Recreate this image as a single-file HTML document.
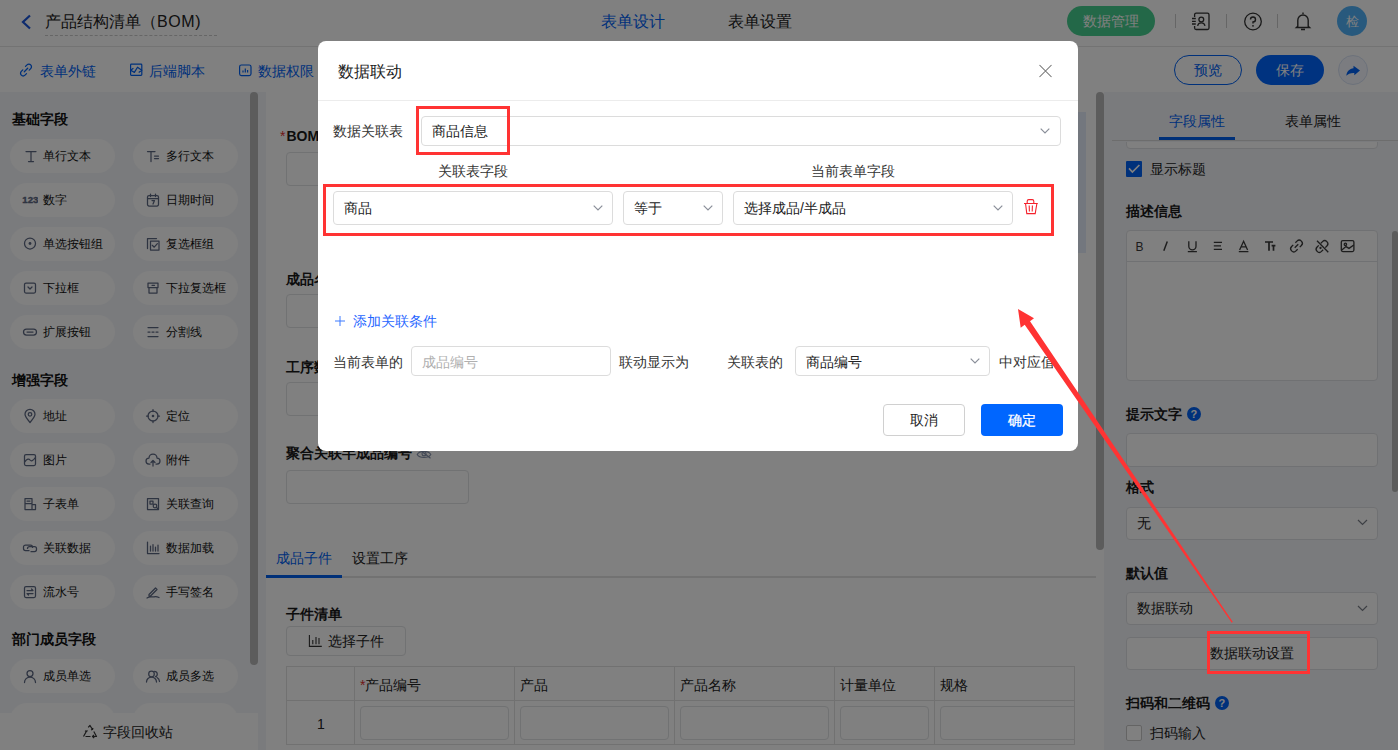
<!DOCTYPE html>
<html><head><meta charset="utf-8">
<style>
*{box-sizing:border-box;margin:0;padding:0}
html,body{width:1398px;height:750px;overflow:hidden;background:#fff}
body{font-family:"Liberation Sans",sans-serif;font-size:14px;color:#333;position:relative}
.a{position:absolute}
.t{position:absolute;white-space:nowrap;line-height:1}
svg{display:block}
/* top */
#top{left:0;top:0;width:1398px;height:47px;background:#fff;border-bottom:1px solid #e6e6e6}
#bar2{left:0;top:47px;width:1398px;height:45px;background:#fff}
#left{left:0;top:92px;width:266px;height:658px;background:#f4f6fa}
.sec{font-weight:bold;color:#111;font-size:14px}
.chip{position:absolute;width:105px;height:34px;border-radius:17px;background:#fff}
.chip .ic{position:absolute;left:12px;top:9px;width:16px;height:16px}
.chip .tx{position:absolute;left:33px;top:11px;font-size:12px;line-height:12px;color:#111;white-space:nowrap}
#canvas{left:266px;top:92px;width:830px;height:658px;background:#fff}
#right{left:1104px;top:92px;width:294px;height:658px;background:#f4f6fa}
.inp{position:absolute;border:1px solid #e2e3e6;border-radius:4px;background:#fff}
.lbl{font-weight:bold;color:#1a1a1a;font-size:14px}
#ov{left:0;top:0;width:1398px;height:750px;background:rgba(0,0,0,.498)}
#modal{left:318px;top:41px;width:760px;height:410px;background:#fff;border-radius:8px;overflow:hidden}
.sel{position:absolute;border:1px solid #dcdcdc;border-radius:4px;background:#fff}
.chev{position:absolute;width:10px;height:6px}
.red{position:absolute;border:3px solid #ff3333}
</style></head><body>

<!-- ============ TOP BAR ============ -->
<div id="top" class="a">
  <svg class="a" style="left:20px;top:14px" width="12" height="16" viewBox="0 0 12 16"><polyline points="10,1.5 3,8 10,14.5" fill="none" stroke="#1a56db" stroke-width="2.2"/></svg>
  <div class="t" style="left:45px;top:14px;font-size:16px;color:#222">产品结构清单（<span style="letter-spacing:0.6px">BOM)</span></div>
  <div class="a" style="left:45px;top:35px;width:172px;border-top:1px dashed #ccc"></div>
  <div class="t" style="left:601px;top:14px;font-size:16px;color:#0062f5">表单设计</div>
  <div class="t" style="left:728px;top:14px;font-size:16px;color:#222">表单设置</div>
  <div class="a" style="left:1067px;top:6px;width:88px;height:30px;border-radius:15px;background:#47cf8f"></div>
  <div class="t" style="left:1083px;top:14px;font-size:14px;color:#fff">数据管理</div>
  <div class="a" style="left:1175px;top:14px;width:1px;height:14px;background:#ccc"></div>
  <div class="a" style="left:1226px;top:14px;width:1px;height:14px;background:#ccc"></div>
  <div class="a" style="left:1277px;top:14px;width:1px;height:14px;background:#ccc"></div>
  <svg class="a" style="left:1188px;top:8px" width="26" height="26" viewBox="0 0 26 26"><g fill="none" stroke="#333" stroke-width="1.3">
    <path d="M6.6 9V6.6A1.5 1.5 0 0 1 8.1 5.2H19.5A1.5 1.5 0 0 1 21 6.7V20A1.5 1.5 0 0 1 19.5 21.5H8.1A1.5 1.5 0 0 1 6.6 20V18"/>
    <path d="M4 10.5H7.8M4 13.3H7.8M4 16H7.8"/>
    <circle cx="13.3" cy="11.5" r="2.4"/>
    <path d="M9.6 17.8A3.8 3.8 0 0 1 17 17.8"/></g></svg>
  <svg class="a" style="left:1243px;top:12px" width="20" height="20" viewBox="0 0 20 20"><circle cx="10" cy="9.5" r="8.3" fill="none" stroke="#333" stroke-width="1.3"/><path d="M7.5 7.5A2.5 2.5 0 1 1 10 10V11.5" fill="none" stroke="#333" stroke-width="1.4"/><circle cx="10" cy="13.8" r="0.9" fill="#333"/></svg>
  <svg class="a" style="left:1290px;top:8px" width="26" height="26" viewBox="0 0 26 26"><g fill="none" stroke="#333" stroke-width="1.4">
    <path d="M12.3 5.3H13.7M7.8 18.2V12.2A5.2 5.2 0 0 1 18.2 12.2V18.2L19.6 19.5H6.4Z M11 21.5H15"/></g></svg>
  <div class="a" style="left:1337px;top:6px;width:30px;height:30px;border-radius:15px;background:#50b2fa"></div>
  <div class="t" style="left:1346px;top:15px;font-size:13px;color:#fff">检</div>
</div>

<!-- ============ BAR 2 ============ -->
<div id="bar2" class="a">
  <svg class="a" style="left:16px;top:13px" width="20" height="20" viewBox="0 0 20 20"><g fill="none" stroke="#0062f5" stroke-width="1.3" stroke-linecap="round">
    <path d="M9.5 6.4L11 4.9A2.6 2.6 0 0 1 14.7 8.6L13.2 10.1M10.5 13.6L9 15.1A2.6 2.6 0 0 1 5.3 11.4L6.8 9.9M8.3 11.7L11.7 8.3"/></g></svg>
  <div class="t" style="left:40px;top:17px;font-size:14px;color:#0062f5">表单外链</div>
  <svg class="a" style="left:126px;top:13px" width="20" height="20" viewBox="0 0 20 20"><g fill="none" stroke="#0062f5" stroke-width="1.2" stroke-linejoin="round">
    <rect x="4.6" y="4.2" width="11.2" height="11.2" rx="0.8"/>
    <path d="M4.6 10.3L7.4 8.2M4.6 10.3L8.4 12.4L11.5 7.2L15.8 10.3L12.7 12.4"/></g></svg>
  <div class="t" style="left:149px;top:17px;font-size:14px;color:#0062f5">后端脚本</div>
  <svg class="a" style="left:235px;top:13px" width="20" height="20" viewBox="0 0 20 20"><g fill="none" stroke="#0062f5" stroke-width="1.2">
    <rect x="4.6" y="5" width="11.4" height="10.6" rx="1.8"/>
    <path d="M8 10.5V12.5M10.3 8.6V12.5M12.6 10V12.5"/></g></svg>
  <div class="t" style="left:258px;top:17px;font-size:14px;color:#0062f5">数据权限</div>
  <div class="a" style="left:1174px;top:8px;width:68px;height:30px;border-radius:15px;border:1px solid #0062f5"></div>
  <div class="t" style="left:1194px;top:16px;font-size:14px;color:#0062f5">预览</div>
  <div class="a" style="left:1256px;top:8px;width:68px;height:30px;border-radius:15px;background:#0066ff"></div>
  <div class="t" style="left:1276px;top:16px;font-size:14px;color:#fff">保存</div>
  <div class="a" style="left:1338px;top:8px;width:30px;height:30px;border-radius:15px;border:1px solid #d8e2f5;background:#f5f8ff"></div>
  <svg class="a" style="left:1338px;top:8px" width="30" height="30" viewBox="0 0 30 30"><path d="M8.3 20.8C8.8 16 11.5 13.8 15.5 13.2V10.8L22 15.5L16.3 20.3V18C12.5 17.8 10 19 8.3 20.8Z" fill="#0062f5"/></svg>
</div>

<!-- ============ LEFT ============ -->
<div id="left" class="a">
  <div class="t sec" style="left:12px;top:20px">基础字段</div>
  <div class="chip" style="left:10px;top:47px"><svg class="ic" viewBox="0 0 16 16"><path fill="none" stroke="#5d6882" stroke-width="1.25" stroke-linecap="round" stroke-linejoin="round" d="M4 3.6H14M9 3.6V13.5M6.5 13.5H11.5"/></svg><span class="tx">单行文本</span></div>
  <div class="chip" style="left:133px;top:47px"><svg class="ic" viewBox="0 0 16 16"><path fill="none" stroke="#5d6882" stroke-width="1.25" stroke-linecap="round" stroke-linejoin="round" d="M2.5 3.5H10M6 3.5V13.5M9.5 8H13.5M9.5 10.5H13.5"/></svg><span class="tx">多行文本</span></div>
  <div class="chip" style="left:10px;top:91px"><svg class="ic" viewBox="0 0 16 16"><text x="0.3" y="11.2" font-family="Liberation Sans" font-weight="bold" font-size="9.6" fill="#5d6882" stroke="#5d6882" stroke-width="0.35">123</text></svg><span class="tx">数字</span></div>
  <div class="chip" style="left:133px;top:91px"><svg class="ic" viewBox="0 0 16 16"><path fill="none" stroke="#5d6882" stroke-width="1.25" stroke-linecap="round" stroke-linejoin="round" d="M4 3.5H12A1.5 1.5 0 0 1 13.5 5V12.5A1.5 1.5 0 0 1 12 14H4A1.5 1.5 0 0 1 2.5 12.5V5A1.5 1.5 0 0 1 4 3.5ZM2.5 6.5H13.5M5.5 2V4.5M10.5 2V4.5M7 8.5H9.5L8 12"/></svg><span class="tx">日期时间</span></div>
  <div class="chip" style="left:10px;top:135px"><svg class="ic" viewBox="0 0 16 16"><circle cx="8" cy="7.5" r="5.5" fill="none" stroke="#5d6882" stroke-width="1.25" stroke-linecap="round" stroke-linejoin="round"/><circle cx="8" cy="7.5" r="1.4" fill="#5d6882"/></svg><span class="tx">单选按钮组</span></div>
  <div class="chip" style="left:133px;top:135px"><svg class="ic" viewBox="0 0 16 16"><path fill="none" stroke="#5d6882" stroke-width="1.25" stroke-linecap="round" stroke-linejoin="round" d="M2.5 12.5V2.5H11.5"/><path fill="none" stroke="#5d6882" stroke-width="1.25" stroke-linecap="round" stroke-linejoin="round" d="M5.5 5H14V14H5.5ZM7.3 9.3L9.2 11.2L12.4 7.6"/></svg><span class="tx">复选框组</span></div>
  <div class="chip" style="left:10px;top:179px"><svg class="ic" viewBox="0 0 16 16"><path fill="none" stroke="#5d6882" stroke-width="1.25" stroke-linecap="round" stroke-linejoin="round" d="M4 3H12A1.5 1.5 0 0 1 13.5 4.5V11.5A1.5 1.5 0 0 1 12 13H4A1.5 1.5 0 0 1 2.5 11.5V4.5A1.5 1.5 0 0 1 4 3ZM6 7L8 9L10 7"/></svg><span class="tx">下拉框</span></div>
  <div class="chip" style="left:133px;top:179px"><svg class="ic" viewBox="0 0 16 16"><path fill="none" stroke="#5d6882" stroke-width="1.25" stroke-linecap="round" stroke-linejoin="round" d="M3 3H13V7.5H3ZM4 7.5V13H12V7.5M7 5.3H9.5"/></svg><span class="tx">下拉复选框</span></div>
  <div class="chip" style="left:10px;top:223px"><svg class="ic" viewBox="0 0 16 16"><rect x="1.5" y="5" width="13" height="6" rx="3" fill="none" stroke="#5d6882" stroke-width="1.25" stroke-linecap="round" stroke-linejoin="round"/><path fill="none" stroke="#5d6882" stroke-width="1.25" stroke-linecap="round" stroke-linejoin="round" d="M5 8H11"/></svg><span class="tx">扩展按钮</span></div>
  <div class="chip" style="left:133px;top:223px"><svg class="ic" viewBox="0 0 16 16"><path fill="none" stroke="#5d6882" stroke-width="1.25" stroke-linecap="round" stroke-linejoin="round" d="M3 3.5H13M3 8H5M7 8H9M11 8H13M3 12.5H13"/></svg><span class="tx">分割线</span></div>
  <div class="t sec" style="left:12px;top:281px">增强字段</div>
  <div class="chip" style="left:10px;top:307px"><svg class="ic" viewBox="0 0 16 16"><path fill="none" stroke="#5d6882" stroke-width="1.25" stroke-linecap="round" stroke-linejoin="round" d="M8 14.5C5 11 3 8.5 3 6.3A5 5 0 0 1 13 6.3C13 8.5 11 11 8 14.5Z"/><circle cx="8" cy="6.3" r="1.8" fill="none" stroke="#5d6882" stroke-width="1.25" stroke-linecap="round" stroke-linejoin="round"/></svg><span class="tx">地址</span></div>
  <div class="chip" style="left:133px;top:307px"><svg class="ic" viewBox="0 0 16 16"><circle cx="8" cy="8" r="5" fill="none" stroke="#5d6882" stroke-width="1.25" stroke-linecap="round" stroke-linejoin="round"/><circle cx="8" cy="8" r="1.3" fill="#5d6882"/><path fill="none" stroke="#5d6882" stroke-width="1.25" stroke-linecap="round" stroke-linejoin="round" d="M8 1.5V3.5M8 12.5V14.5M1.5 8H3.5M12.5 8H14.5"/></svg><span class="tx">定位</span></div>
  <div class="chip" style="left:10px;top:351px"><svg class="ic" viewBox="0 0 16 16"><path fill="none" stroke="#5d6882" stroke-width="1.25" stroke-linecap="round" stroke-linejoin="round" d="M4 2.5H12A1.5 1.5 0 0 1 13.5 4V12A1.5 1.5 0 0 1 12 13.5H4A1.5 1.5 0 0 1 2.5 12V4A1.5 1.5 0 0 1 4 2.5ZM2.8 10C5 6.5 7 6.5 8 8S11 9 13.3 5.5"/></svg><span class="tx">图片</span></div>
  <div class="chip" style="left:133px;top:351px"><svg class="ic" viewBox="0 0 16 16"><path fill="none" stroke="#5d6882" stroke-width="1.25" stroke-linecap="round" stroke-linejoin="round" d="M5 12H4A3 3 0 0 1 4 6A4 4 0 0 1 12 6A3 3 0 0 1 12 12H11M8 14V8.5M6 10.5L8 8.5L10 10.5"/></svg><span class="tx">附件</span></div>
  <div class="chip" style="left:10px;top:395px"><svg class="ic" viewBox="0 0 16 16"><path fill="none" stroke="#5d6882" stroke-width="1.25" stroke-linecap="round" stroke-linejoin="round" d="M3 2.5H10V7.5H3ZM3 7.5V13.5H10M10 8.5H13.5V13.5H10ZM5 5H8"/></svg><span class="tx">子表单</span></div>
  <div class="chip" style="left:133px;top:395px"><svg class="ic" viewBox="0 0 16 16"><path fill="none" stroke="#5d6882" stroke-width="1.25" stroke-linecap="round" stroke-linejoin="round" d="M2.5 2.5H13.5V13.5H2.5ZM5 5H8V8H5Z"/><circle cx="10" cy="10" r="1.8" fill="none" stroke="#5d6882" stroke-width="1.25" stroke-linecap="round" stroke-linejoin="round"/><path fill="none" stroke="#5d6882" stroke-width="1.25" stroke-linecap="round" stroke-linejoin="round" d="M11.3 11.3L12.8 12.8"/></svg><span class="tx">关联查询</span></div>
  <div class="chip" style="left:10px;top:439px"><svg class="ic" viewBox="0 0 16 16"><g fill="none" stroke="#5d6882" stroke-width="1.25" stroke-linejoin="round"><path d="M7.5 10.5H3.5A2 2 0 0 1 1.5 8.5V7A2 2 0 0 1 3.5 5H8.5A2 2 0 0 1 10.5 7V8"/><path d="M8.5 6.5V6.5M8.5 11.5H12.5A2 2 0 0 0 14.5 9.5V8.5A2 2 0 0 0 12.5 6.5H7.5A2 2 0 0 0 5.5 8.5V9"/></g></svg><span class="tx">关联数据</span></div>
  <div class="chip" style="left:133px;top:439px"><svg class="ic" viewBox="0 0 16 16"><path fill="none" stroke="#5d6882" stroke-width="1.25" stroke-linecap="round" stroke-linejoin="round" d="M2.5 2V13.5H14M5.5 6V11M8 4.5V11M10.5 7V11M13 5V11"/></svg><span class="tx">数据加载</span></div>
  <div class="chip" style="left:10px;top:483px"><svg class="ic" viewBox="0 0 16 16"><path fill="none" stroke="#5d6882" stroke-width="1.25" stroke-linecap="round" stroke-linejoin="round" d="M4 2.5H12A1.5 1.5 0 0 1 13.5 4V12A1.5 1.5 0 0 1 12 13.5H4A1.5 1.5 0 0 1 2.5 12V4A1.5 1.5 0 0 1 4 2.5ZM5 6.5H11L9.5 5M11 9.5H5L6.5 11"/></svg><span class="tx">流水号</span></div>
  <div class="chip" style="left:133px;top:483px"><svg class="ic" viewBox="0 0 16 16"><path fill="none" stroke="#5d6882" stroke-width="1.25" stroke-linecap="round" stroke-linejoin="round" d="M4 10.5L10.5 4L12 5.5L5.5 12H4ZM2 14C5 12 7 13.5 9 12.8C10.5 12.3 12 12.5 14 13.5"/></svg><span class="tx">手写签名</span></div>
  <div class="t sec" style="left:12px;top:540px">部门成员字段</div>
  <div class="chip" style="left:10px;top:567px"><svg class="ic" viewBox="0 0 16 16"><circle cx="8" cy="5.5" r="3" fill="none" stroke="#5d6882" stroke-width="1.25" stroke-linecap="round" stroke-linejoin="round"/><path fill="none" stroke="#5d6882" stroke-width="1.25" stroke-linecap="round" stroke-linejoin="round" d="M2.5 14.5A5.5 5.5 0 0 1 13.5 14.5"/></svg><span class="tx">成员单选</span></div>
  <div class="chip" style="left:133px;top:567px"><svg class="ic" viewBox="0 0 16 16"><circle cx="6.5" cy="6" r="2.8" fill="none" stroke="#5d6882" stroke-width="1.25" stroke-linecap="round" stroke-linejoin="round"/><path fill="none" stroke="#5d6882" stroke-width="1.25" stroke-linecap="round" stroke-linejoin="round" d="M1.5 14A5 5 0 0 1 11.5 14M9.5 3.3A2.8 2.8 0 0 1 10.5 8.7M12 9.5A5 5 0 0 1 14.5 13.5"/></svg><span class="tx">成员多选</span></div>
  <div class="chip" style="left:10px;top:611px"></div>
  <div class="chip" style="left:133px;top:611px"></div>
  <div class="a" style="left:250px;top:0;width:8px;height:573px;border-radius:4px;background:#b8b8b8"></div>
  <div class="a" style="left:0;top:621px;width:258px;height:37px;background:#fff"></div>
  <svg class="a" style="left:82px;top:632px" width="16" height="16" viewBox="0 0 16 16"><g fill="none" stroke="#333" stroke-width="1.2" stroke-linejoin="round"><path d="M6.2 3.3L8 1.5L10.5 5.5M11.8 7.5L14.5 12.5H10.5M8.5 12.5H3.5M1.5 12.5L4.3 7.5M9 5.8L10.5 5.5L11 4M12.2 14L10.5 12.5L12 11M3 6.8L4.3 7.5L5.5 6.5"/></g></svg>
  <div class="t" style="left:103px;top:633px;font-size:14px;color:#222">字段回收站</div>
</div>
<!-- ============ CANVAS ============ -->
<div id="canvas" class="a"></div>
<div class="a" style="left:1078px;top:112px;width:8px;height:141px;background:#e6edfb"></div>
<div class="t lbl" style="left:280px;top:129px"><span style="color:#e03030;font-weight:normal;margin-right:1px">*</span>BOM编号</div>
<div class="inp" style="left:286px;top:152px;width:700px;height:34px"></div>
<div class="t lbl" style="left:286px;top:272px">成品名称</div>
<div class="inp" style="left:286px;top:294px;width:700px;height:34px"></div>
<div class="t lbl" style="left:286px;top:360px">工序数量</div>
<div class="inp" style="left:286px;top:382px;width:700px;height:34px"></div>
<div class="t lbl" style="left:286px;top:446px">聚合关联半成品编号</div>
<svg class="a" style="left:416px;top:446px" width="16" height="14" viewBox="0 0 16 14"><g fill="none" stroke="#8592ad" stroke-width="1.1"><path d="M1.2 8.4C3.5 4.3 12.5 4.3 14.8 8.4C12.5 12.4 3.5 12.4 1.2 8.4Z"/><circle cx="8" cy="7.8" r="2"/><path d="M6.5 6L14.5 12.2"/></g></svg>
<div class="inp" style="left:286px;top:470px;width:183px;height:34px"></div>
<!-- tabs -->
<div class="a" style="left:266px;top:576px;width:830px;height:2px;background:#e4e4e4"></div>
<div class="a" style="left:266px;top:575px;width:76px;height:3px;background:#0060f0"></div>
<div class="t" style="left:276px;top:551px;font-size:14px;color:#0062f5">成品子件</div>
<div class="t" style="left:352px;top:551px;font-size:14px;color:#222">设置工序</div>
<div class="t lbl" style="left:286px;top:607px">子件清单</div>
<div class="inp" style="left:286px;top:626px;width:120px;height:30px"></div>
<svg class="a" style="left:308px;top:634px" width="14" height="14" viewBox="0 0 14 14"><path d="M1.4 1V12.4H13.8M4.8 6V10.2M8 3V10.2M11 4V10.2" fill="none" stroke="#333" stroke-width="1.1"/></svg>
<div class="t" style="left:328px;top:634px;font-size:14px;color:#222">选择子件</div>
<!-- table -->
<div class="a" style="left:286px;top:666px;width:789px;height:84px;overflow:hidden">
  <div class="t" style="left:74px;top:12px;font-size:14px;color:#222"><span style="color:#e03030">*</span>产品编号</div>
  <div class="t" style="left:234px;top:12px;font-size:14px;color:#222">产品</div>
  <div class="t" style="left:394px;top:12px;font-size:14px;color:#222">产品名称</div>
  <div class="t" style="left:554px;top:12px;font-size:14px;color:#222">计量单位</div>
  <div class="t" style="left:654px;top:12px;font-size:14px;color:#222">规格</div>
  <div class="t" style="left:31px;top:51px;font-size:14px;color:#222">1</div>
  <div class="inp" style="left:74px;top:40px;width:149px;height:34px"></div>
  <div class="inp" style="left:234px;top:40px;width:149px;height:34px"></div>
  <div class="inp" style="left:394px;top:40px;width:149px;height:34px"></div>
  <div class="inp" style="left:554px;top:40px;width:89px;height:34px"></div>
  <div class="inp" style="left:654px;top:40px;width:149px;height:34px"></div>
  <div class="a" style="left:0;top:0;width:789px;height:79px;border:1px solid #e2e2e2"></div>
  <div class="a" style="left:0;top:34px;width:789px;height:1px;background:#e2e2e2"></div>
  <div class="a" style="left:68px;top:0;width:1px;height:79px;background:#e2e2e2"></div>
  <div class="a" style="left:228px;top:0;width:1px;height:79px;background:#e2e2e2"></div>
  <div class="a" style="left:388px;top:0;width:1px;height:79px;background:#e2e2e2"></div>
  <div class="a" style="left:548px;top:0;width:1px;height:79px;background:#e2e2e2"></div>
  <div class="a" style="left:648px;top:0;width:1px;height:79px;background:#e2e2e2"></div>
</div>
<div class="a" style="left:1096px;top:92px;width:8px;height:458px;border-radius:4px;background:#b8b8b8"></div>
<!-- ============ RIGHT ============ -->
<div id="right" class="a"></div>
<div class="inp" style="left:1126px;top:110px;width:252px;height:39px;border-color:#e0e2e6"></div>
<div class="a" style="left:1104px;top:92px;width:294px;height:50px;background:#f4f6fa"></div>
<div class="a" style="left:1112px;top:140px;width:286px;height:1px;background:#d9d9d9"></div>
<div class="a" style="left:1159px;top:137px;width:76px;height:3px;background:#0060f0"></div>
<div class="t" style="left:1169px;top:114px;font-size:14px;color:#0062f5">字段属性</div>
<div class="t" style="left:1285px;top:114px;font-size:14px;color:#222">表单属性</div>
<!-- checkbox -->
<div class="a" style="left:1126px;top:161px;width:16px;height:16px;border-radius:1px;background:#0062f5"></div>
<svg class="a" style="left:1126px;top:161px" width="16" height="16" viewBox="0 0 16 16"><path d="M3 7.4L6.4 11L13.4 4" fill="none" stroke="#fff" stroke-width="1.7"/></svg>
<div class="t" style="left:1150px;top:162px;font-size:14px;color:#222">显示标题</div>
<div class="t lbl" style="left:1126px;top:204px">描述信息</div>
<!-- editor -->
<div class="inp" style="left:1126px;top:230px;width:252px;height:151px;border-color:#e0e2e6"></div>
<div class="a" style="left:1127px;top:261px;width:250px;height:1px;background:#e0e2e6"></div>
<svg class="a" style="left:1128px;top:234px" width="240" height="24" viewBox="0 0 240 24">
 <text x="7.6" y="16.8" font-family="Liberation Sans" font-size="12" fill="#3a3a3a">B</text>
 <g fill="none" stroke="#3a3a3a" stroke-width="1.3">
  <path d="M39.3 7.4L35.8 16.8" stroke-width="1.5"/>
  <path d="M60.8 7.3V12.3A3.6 3.6 0 0 0 68 12.3V7.3M59.8 17.6H68.9"/>
  <path d="M85.8 8.4H94M85.8 11.8H93M85.8 15.3H94"/>
  <path d="M111.6 16L115.6 7.3L119.6 16M113 12.8H118.2M110.8 17.6H120.4"/>
  <path d="M137 8H145M141 8V16.8M143.6 11.6H147.4M145.5 11.6V16.8" stroke-width="1.7"/>
  <g transform="rotate(-45 168.5 12)"><path d="M167 8.9H164.7A3.1 3.1 0 0 0 164.7 15.1H167M170 8.9H172.3A3.1 3.1 0 0 1 172.3 15.1H170M166 12H171"/></g>
  <g transform="rotate(-45 194 12.5)"><path d="M192.5 9.4H190.2A3.1 3.1 0 0 0 190.2 15.6H192.5M195.5 9.4H197.8A3.1 3.1 0 0 1 197.8 15.6H195.5"/></g>
  <path d="M189 6.8L200.3 18.2"/><circle cx="192.5" cy="14" r="0.5" fill="#3a3a3a"/>
  <rect x="213.3" y="6.6" width="12.6" height="11" rx="1.5"/>
  <circle cx="217.4" cy="10.3" r="1.2"/>
  <path d="M213.5 16.2L218 12.6L221 14.4L225.8 11"/>
 </g>
</svg>
<div class="t lbl" style="left:1126px;top:407px">提示文字</div>
<div class="a" style="left:1187px;top:407px;width:14px;height:14px;border-radius:7px;background:#0062f5"></div>
<div class="t" style="left:1190.5px;top:409px;font-size:11px;color:#fff;font-weight:bold">?</div>
<div class="inp" style="left:1126px;top:433px;width:252px;height:34px;border-color:#e0e2e6"></div>
<div class="t lbl" style="left:1126px;top:480px">格式</div>
<div class="inp" style="left:1126px;top:507px;width:252px;height:33px;border-color:#e0e2e6"></div>
<div class="t" style="left:1137px;top:516px;font-size:14px;color:#222">无</div>
<svg class="a" style="left:1357px;top:519px" width="11" height="7" viewBox="0 0 11 7"><path d="M1 1L5.5 5.5L10 1" fill="none" stroke="#7a7f88" stroke-width="1.2"/></svg>
<div class="t lbl" style="left:1126px;top:566px">默认值</div>
<div class="inp" style="left:1126px;top:592px;width:252px;height:33px;border-color:#e0e2e6"></div>
<div class="t" style="left:1137px;top:601px;font-size:14px;color:#222">数据联动</div>
<svg class="a" style="left:1357px;top:605px" width="11" height="7" viewBox="0 0 11 7"><path d="M1 1L5.5 5.5L10 1" fill="none" stroke="#7a7f88" stroke-width="1.2"/></svg>
<div class="inp" style="left:1126px;top:637px;width:252px;height:33px;border-color:#e0e2e6"></div>
<div class="t" style="left:1210px;top:646px;font-size:14px;color:#222">数据联动设置</div>
<div class="t lbl" style="left:1126px;top:696px">扫码和二维码</div>
<div class="a" style="left:1215px;top:696px;width:14px;height:14px;border-radius:7px;background:#0062f5"></div>
<div class="t" style="left:1218.5px;top:698px;font-size:11px;color:#fff;font-weight:bold">?</div>
<div class="a" style="left:1126px;top:725px;width:16px;height:16px;border-radius:2px;border:1px solid #c8c8c8;background:#fff"></div>
<div class="t" style="left:1150px;top:726px;font-size:14px;color:#222">扫码输入</div>
<div class="a" style="left:1392px;top:231px;width:6px;height:261px;border-radius:3px;background:#b8b8b8"></div>
<!-- ============ OVERLAY ============ -->
<div id="ov" class="a"></div>

<!-- ============ MODAL ============ -->
<div id="modal" class="a">
  <div class="t" style="left:20px;top:23px;font-size:16px;color:#222">数据联动</div>
  <svg class="a" style="left:721px;top:23px" width="14" height="14" viewBox="0 0 14 14"><path d="M0.5 1L12.5 13M12.5 1L0.5 13" stroke="#6e6e6e" stroke-width="1.05"/></svg>
  <div class="a" style="left:0;top:59px;width:760px;height:1px;background:#ececec"></div>

  <div class="t" style="left:15px;top:83px;font-size:14px;color:#333">数据关联表</div>
  <div class="sel" style="left:103px;top:75px;width:640px;height:30px"></div>
  <div class="t" style="left:114px;top:83px;font-size:14px;color:#222">商品信息</div>
  <svg class="chev" style="left:722px;top:87px" viewBox="0 0 10 6"><path d="M0.7 0.7L5 5L9.3 0.7" fill="none" stroke="#8a8f99" stroke-width="1.2"/></svg>

  <div class="t" style="left:120px;top:123px;font-size:14px;color:#333">关联表字段</div>
  <div class="t" style="left:493px;top:123px;font-size:14px;color:#333">当前表单字段</div>

  <div class="sel" style="left:15px;top:150px;width:280px;height:34px"></div>
  <div class="t" style="left:26px;top:160px;font-size:14px;color:#222">商品</div>
  <svg class="chev" style="left:275px;top:164px" viewBox="0 0 10 6"><path d="M0.7 0.7L5 5L9.3 0.7" fill="none" stroke="#8a8f99" stroke-width="1.2"/></svg>
  <div class="sel" style="left:305px;top:150px;width:100px;height:34px"></div>
  <div class="t" style="left:316px;top:160px;font-size:14px;color:#222">等于</div>
  <svg class="chev" style="left:385px;top:164px" viewBox="0 0 10 6"><path d="M0.7 0.7L5 5L9.3 0.7" fill="none" stroke="#8a8f99" stroke-width="1.2"/></svg>
  <div class="sel" style="left:415px;top:150px;width:280px;height:34px"></div>
  <div class="t" style="left:426px;top:160px;font-size:14px;color:#222">选择成品/半成品</div>
  <svg class="chev" style="left:675px;top:164px" viewBox="0 0 10 6"><path d="M0.7 0.7L5 5L9.3 0.7" fill="none" stroke="#8a8f99" stroke-width="1.2"/></svg>
  <svg class="a" style="left:705px;top:157px" width="16" height="17" viewBox="0 0 16 17"><g fill="none" stroke="#f5222d" stroke-width="1.1"><path d="M1 5.5H14.8M4.2 5.5V3.2A1.6 1.6 0 0 1 5.8 1.6H9.2A1.6 1.6 0 0 1 10.8 3.2V5.5M2.6 6L3.8 15.6H12.2L13.8 6M6.2 7.4L6.4 13.4M9.4 7.4L9.2 13.4"/></g></svg>

  <svg class="a" style="left:16px;top:274px" width="12" height="12" viewBox="0 0 12 12"><path d="M6 1V11M1 6H11" stroke="#3d7bff" stroke-width="1"/></svg>
  <div class="t" style="left:35px;top:273px;font-size:14px;color:#1f66ff">添加关联条件</div>

  <div class="t" style="left:15px;top:314px;font-size:14px;color:#333">当前表单的</div>
  <div class="sel" style="left:93px;top:305px;width:200px;height:30px"></div>
  <div class="t" style="left:104px;top:314px;font-size:14px;color:#b0b0b0">成品编号</div>
  <div class="t" style="left:301px;top:314px;font-size:14px;color:#333">联动显示为</div>
  <div class="t" style="left:409px;top:314px;font-size:14px;color:#333">关联表的</div>
  <div class="sel" style="left:477px;top:305px;width:195px;height:30px"></div>
  <div class="t" style="left:488px;top:314px;font-size:14px;color:#222">商品编号</div>
  <svg class="chev" style="left:652px;top:317px" viewBox="0 0 10 6"><path d="M0.7 0.7L5 5L9.3 0.7" fill="none" stroke="#8a8f99" stroke-width="1.2"/></svg>
  <div class="a" style="left:681px;top:300px;width:54px;height:40px;overflow:hidden"><div class="t" style="left:0;top:14px;font-size:14px;color:#333">中对应值</div></div>

  <div class="sel" style="left:565px;top:363px;width:82px;height:32px;border-color:#d0d0d0"></div>
  <div class="t" style="left:592px;top:372px;font-size:14px;color:#222">取消</div>
  <div class="a" style="left:663px;top:363px;width:82px;height:32px;border-radius:4px;background:#0066ff"></div>
  <div class="t" style="left:690px;top:372px;font-size:14px;color:#fff;-webkit-text-stroke:0.25px #fff">确定</div>
</div>

<!-- ============ ANNOTATIONS ============ -->
<div class="red" style="left:416px;top:106px;width:94px;height:49px"></div>
<div class="red" style="left:323px;top:184px;width:731px;height:52px"></div>
<div class="red" style="left:1207px;top:631px;width:103px;height:43px"></div>
<svg class="a" style="left:0;top:0" width="1398" height="750" viewBox="0 0 1398 750">
  <path d="M1018 309L1034 318.3L1030 321.2L1232.84 622.03L1231.76 622.77L1024.7 324.8L1020.7 327.7Z" fill="#ff3333"/>
</svg>

</body></html>
